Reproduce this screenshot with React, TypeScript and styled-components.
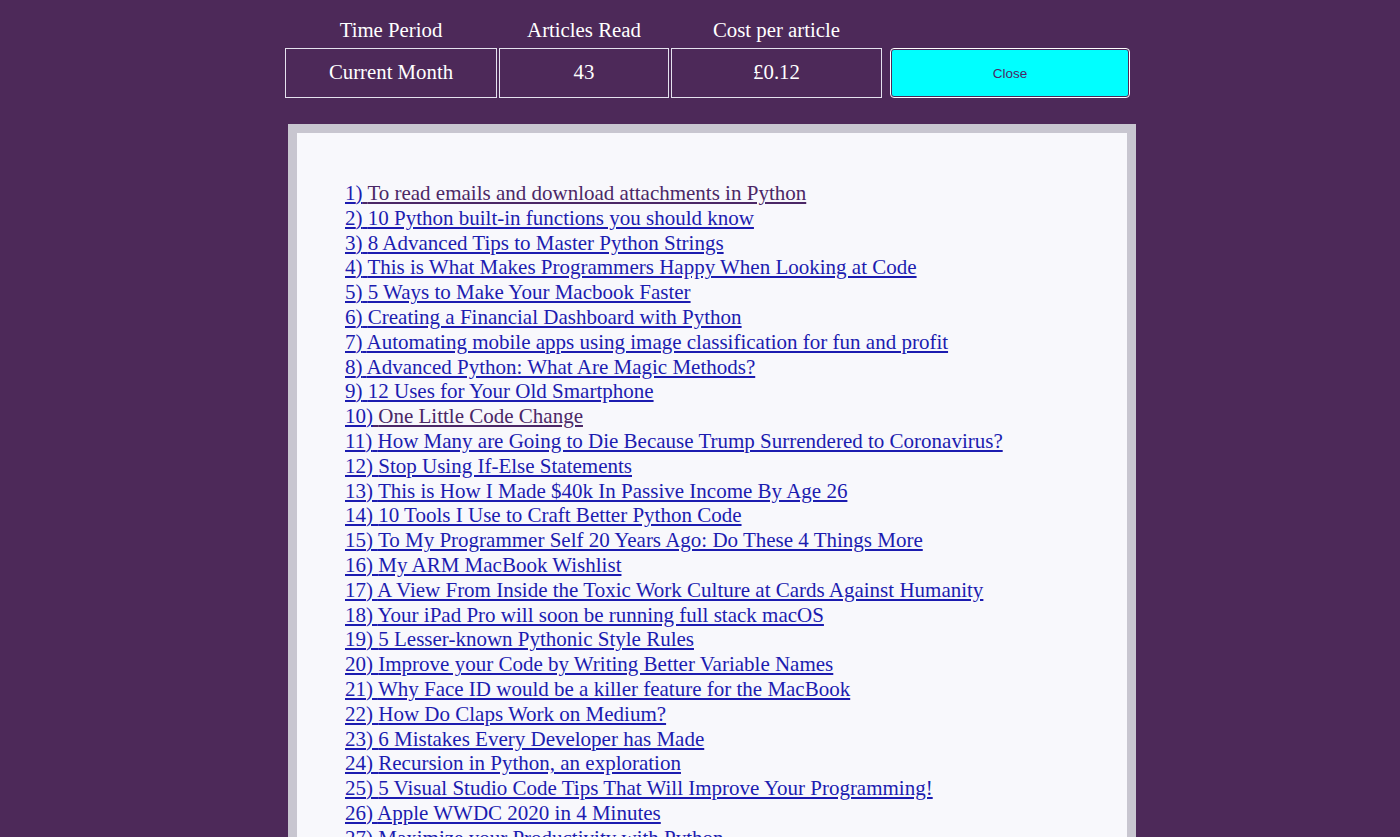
import React from "react";
import styled, { createGlobalStyle } from "styled-components";

const GlobalStyle = createGlobalStyle`
  html, body {
    margin: 0;
    padding: 0;
    background: #4d2959;
    overflow: hidden;
  }
  body {
    font-family: "Liberation Serif", "Times New Roman", serif;
  }
`;

const Page = styled.div`
  width: 851px;
  margin-left: 285px;
  padding-top: 16px;
`;

const LabelRow = styled.div`
  display: flex;
  gap: 2px;
  height: 32px;
`;

const Label = styled.div<{ $w: number }>`
  width: ${(p) => p.$w}px;
  text-align: center;
  color: #ffffff;
  font-size: 20.8px;
  line-height: 28px;
`;

const CellRow = styled.div`
  display: flex;
  gap: 2px;
  height: 50px;
`;

const Cell = styled.div<{ $w: number }>`
  width: ${(p) => p.$w}px;
  box-sizing: border-box;
  border: 1px solid #e4e2ee;
  display: flex;
  align-items: center;
  justify-content: center;
  padding-bottom: 2px;
  color: #ffffff;
  font-size: 20.8px;
`;

const CloseButton = styled.button`
  margin-left: 6px;
  width: 240px;
  height: 50px;
  box-sizing: border-box;
  background: #00ffff;
  border: 2px solid #4d2959;
  outline: 1px solid #ffffff;
  outline-offset: -1px;
  border-radius: 4px;
  color: #4b2766;
  font-family: "Liberation Sans", Arial, sans-serif;
  font-size: 13.5px;
  cursor: pointer;
`;

const Panel = styled.div`
  margin-top: 26px;
  margin-left: 3px;
  width: 848px;
  box-sizing: border-box;
  border: 9px solid #c8c6d0;
  border-bottom: none;
  background: #f8f8fc;
  padding: 48px 48px 40px;
`;

const List = styled.div`
  display: flex;
  flex-direction: column;
  align-items: flex-start;
`;

const Item = styled.a<{ $visited?: boolean }>`
  font-size: 21px;
  line-height: 24.8px;
  color: ${(p) => (p.$visited ? "#4b2766" : "#1c1cb0")};
  text-decoration: underline;
  text-underline-offset: 2px;
  cursor: pointer;
`;

const Num = styled.span`
  color: #1c1cb0;
  text-decoration: underline;
`;

const titles = [
  "To read emails and download attachments in Python",
  "10 Python built-in functions you should know",
  "8 Advanced Tips to Master Python Strings",
  "This is What Makes Programmers Happy When Looking at Code",
  "5 Ways to Make Your Macbook Faster",
  "Creating a Financial Dashboard with Python",
  "Automating mobile apps using image classification for fun and profit",
  "Advanced Python: What Are Magic Methods?",
  "12 Uses for Your Old Smartphone",
  "One Little Code Change",
  "How Many are Going to Die Because Trump Surrendered to Coronavirus?",
  "Stop Using If-Else Statements",
  "This is How I Made $40k In Passive Income By Age 26",
  "10 Tools I Use to Craft Better Python Code",
  "To My Programmer Self 20 Years Ago: Do These 4 Things More",
  "My ARM MacBook Wishlist",
  "A View From Inside the Toxic Work Culture at Cards Against Humanity",
  "Your iPad Pro will soon be running full stack macOS",
  "5 Lesser-known Pythonic Style Rules",
  "Improve your Code by Writing Better Variable Names",
  "Why Face ID would be a killer feature for the MacBook",
  "How Do Claps Work on Medium?",
  "6 Mistakes Every Developer has Made",
  "Recursion in Python, an exploration",
  "5 Visual Studio Code Tips That Will Improve Your Programming!",
  "Apple WWDC 2020 in 4 Minutes",
  "Maximize your Productivity with Python",
];

const visited = new Set([0, 9]);

export default function App() {
  return (
    <>
      <GlobalStyle />
      <Page>
        <LabelRow>
          <Label $w={212}>Time Period</Label>
          <Label $w={170}>Articles Read</Label>
          <Label $w={211}>Cost per article</Label>
        </LabelRow>
        <CellRow>
          <Cell $w={212}>Current Month</Cell>
          <Cell $w={170}>43</Cell>
          <Cell $w={211}>£0.12</Cell>
          <CloseButton>Close</CloseButton>
        </CellRow>
        <Panel>
          <List>
            {titles.map((t, i) => (
              <Item key={i} $visited={visited.has(i)}>
                <Num>{i + 1})</Num> {t}
              </Item>
            ))}
          </List>
        </Panel>
      </Page>
    </>
  );
}
